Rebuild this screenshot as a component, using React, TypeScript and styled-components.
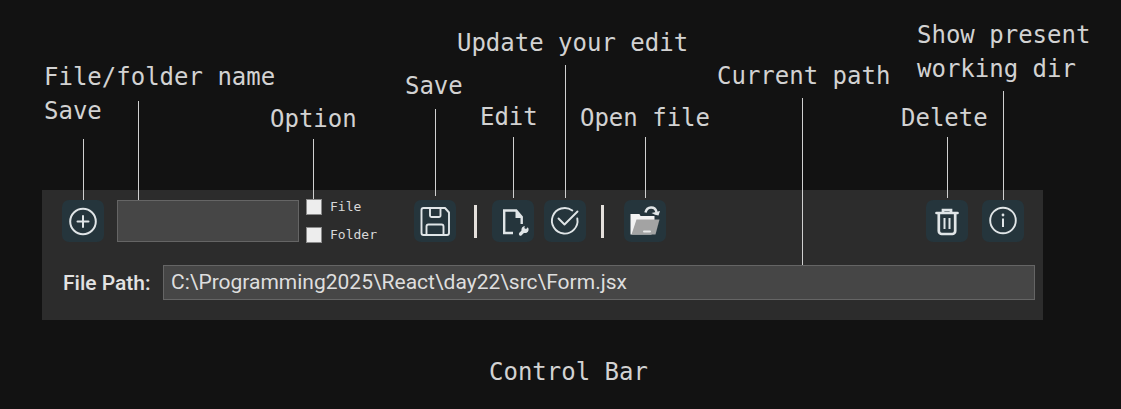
import React from "react";
import styled, { createGlobalStyle } from "styled-components";

const GlobalStyle = createGlobalStyle`
  *, *::before, *::after { box-sizing: border-box; }
  body {
    margin: 0;
    background: #121212;
    color: #d2d2d2;
    font-family: "DejaVu Sans Mono", monospace;
  }
`;

const Figure = styled.figure`
  margin: 0;
  padding: 190px 78px 0 42px;
`;

const Caption = styled.figcaption`
  padding: 35px 0 20px 52px;
  font-size: 24px;
  line-height: 34px;
  text-align: center;
`;

const Panel = styled.form`
  display: flex;
  flex-direction: column;
  gap: 22px;
  padding: 9px 8px 20px 20px;
  background: #2c2c2c;
`;

const Toolbar = styled.div`
  display: flex;
  align-items: center;
  justify-content: space-between;
  padding-right: 11px;
`;

const Group = styled.div<{ $gap: number }>`
  display: flex;
  align-items: center;
  gap: ${(p) => p.$gap}px;
`;

const CreateGroup = styled(Group)`
  margin-right: 37px;
`;

const Anchor = styled.div`
  position: relative;
  display: flex;
`;

/* Leader line that rises from a control to its annotation. */
const Leader = styled.div<{ $x: string; $length: number; $clear: number }>`
  position: absolute;
  left: ${(p) => p.$x};
  bottom: calc(100% + ${(p) => p.$clear}px);
  width: 1px;
  height: ${(p) => p.$length}px;
  background: #d0d0d0;
  pointer-events: none;
`;

const Note = styled.label<{ $shift: number; $gap: number }>`
  position: absolute;
  left: ${(p) => -p.$shift}px;
  bottom: calc(100% + ${(p) => p.$gap}px);
  color: #d2d2d2;
  font-size: 24px;
  line-height: 34px;
  white-space: pre;
`;

const IconButton = styled.button`
  display: flex;
  width: 42px;
  height: 42px;
  padding: 0;
  border: 0;
  border-radius: 7px;
  background: #25353c;
  color: #e0e5e7;
  cursor: pointer;
`;

const Icon = styled.svg`
  width: 42px;
  height: 42px;
  fill: none;
  stroke: currentColor;
  stroke-width: 2;
  stroke-linecap: round;
  stroke-linejoin: round;
`;

const TextBox = styled.input`
  border: 1px solid #656565;
  border-radius: 0;
  background: #464646;
  color: #dedede;
  font-family: Roboto, sans-serif;
  font-size: 21px;
  outline: none;
`;

const NameBox = styled(TextBox)`
  width: 182px;
  height: 42px;
  padding: 0 8px;
`;

const PathBox = styled(TextBox)`
  width: 100%;
  height: 35px;
  padding: 0 7px 2px;
`;

const Options = styled.div`
  position: relative;
  display: flex;
  flex-direction: column;
  gap: 12px;
`;

const Option = styled.label`
  display: flex;
  align-items: center;
  gap: 8px;
  height: 16px;
  color: #d9d9d9;
  font-size: 13px;
  line-height: 16px;
`;

const Tick = styled.input`
  appearance: none;
  width: 16px;
  height: 16px;
  margin: 0;
  border: 1px solid #8a8a8a;
  background: #ededed;
  &:checked { background: #7fa7b8; }
`;

const Divider = styled.span<{ $before: number; $after: number }>`
  width: 3px;
  height: 33px;
  margin-left: ${(p) => p.$before}px;
  margin-right: ${(p) => p.$after}px;
  background: #e4e0dc;
`;

const PathRow = styled.div`
  display: flex;
  align-items: center;
  gap: 10px;
`;

const PathLabel = styled.label`
  flex: none;
  width: 91px;
  padding-left: 1px;
  color: #e2e2e2;
  font-family: Roboto, sans-serif;
  font-size: 21px;
  font-weight: 500;
  line-height: 24px;
  white-space: nowrap;
`;

const PathAnchor = styled(Anchor)`
  flex: 1;
`;

type CalloutProps = {
  text: string;
  target: string;
  length: number;
  shift: number;
  gap?: number;
  x?: string;
  clear?: number;
};

function Callout({ text, target, length, shift, gap = 3, x = "50%", clear = 2 }: CalloutProps) {
  return (
    <Leader $x={x} $length={length} $clear={clear}>
      <Note htmlFor={target} $shift={shift} $gap={gap}>{text}</Note>
    </Leader>
  );
}

type ToolProps = Omit<CalloutProps, "target"> & { id: string; children: React.ReactNode };

function Tool({ id, children, ...note }: ToolProps) {
  return (
    <Anchor>
      <IconButton type="button" id={id}>
        <Icon viewBox="0 0 42 42" aria-hidden="true">{children}</Icon>
      </IconButton>
      <Callout target={id} {...note} />
    </Anchor>
  );
}

export default function App() {
  return (
    <>
      <GlobalStyle />
      <Figure>
        <Panel onSubmit={(e) => e.preventDefault()}>
          <Toolbar>
            <Group $gap={0}>
              <CreateGroup $gap={13}>
                <Tool id="create" text="Save" length={61} shift={39} gap={11} clear={0}>
                  <circle cx="21" cy="21.5" r="12.8" />
                  <path d="M21 16v11M15.500 21.500h11" />
                </Tool>
                <Group $gap={7}>
                  <Anchor>
                    <NameBox id="name" type="text" />
                    <Callout text="File/folder name" target="name" length={99} shift={94} gap={7} x="21px" clear={0} />
                  </Anchor>
                  <Options>
                    <Option><Tick type="checkbox" id="file" />File</Option>
                    <Option><Tick type="checkbox" id="folder" />Folder</Option>
                    <Callout text="Option" target="file" length={60} shift={43} x="7px" clear={0} />
                  </Options>
                </Group>
              </CreateGroup>
              <Group $gap={10}>
                <Tool id="save" text="Save" length={87} shift={30} gap={6} clear={4}>
                  <path d="M9.500 8h21.500l4 4.500v20.500a2 2 0 0 1-2 2h-23.500a2 2 0 0 1-2-2v-23a2 2 0 0 1 2-2zM16 8v7.500a1.500 1.500 0 0 0 1.500 1.500h7.500a1.500 1.500 0 0 0 1.500-1.500v-7.500M12.500 35v-8.500a2 2 0 0 1 2-2h13a2 2 0 0 1 2 2v8.500" strokeWidth="1.900" />
                </Tool>
                <Divider $before={8} $after={5} />
                <Tool id="edit" text="Edit" length={61} shift={33}>
                  <path d="M21 33h-8.800v-22.500h12l5.500 6.500v7" strokeWidth="2.400" strokeLinecap="butt" strokeLinejoin="miter" />
                  <path d="M23.500 10v8h7z" fill="currentColor" stroke="none" />
                  <path d="M28.500 34l4-4" strokeWidth="3.200" />
                  <path d="M35.800 27.200a3.600 3.600 0 1 1-3-1.300l-.5 2.600 1.300 1.100z" fill="currentColor" stroke="none" />
                </Tool>
                <Tool id="update" text="Update your edit" length={133} shift={108} gap={5}>
                  <path d="M33.300 18.500a12.800 12.800 0 1 1-5-8M14.500 18.500l6 6L33.500 11.500" strokeWidth="1.900" />
                </Tool>
                <Divider $before={5} $after={10} />
                <Tool id="open" text="Open file" length={61} shift={65} gap={2}>
                  <path d="M6.500 14h8.500q1 0 1.500 2h14v6l-3 12.500H6.500z" fill="#f2f2f2" stroke="none" />
                  <path d="M12.500 19.500H35.500L31.500 34.500H7.500z" fill="#a3a3a3" stroke="none" />
                  <path d="M20 31.500h6" stroke="#e9e9e9" />
                  <path d="M21.500 12.500c1.500-6.500 9.500-6.500 11-.5" strokeWidth="2.500" strokeLinecap="butt" />
                  <path d="M27.500 13l8.500-2-1.500 4.500q-3.500-.5-7-2.500z" fill="currentColor" stroke="none" />
                </Tool>
              </Group>
            </Group>
            <Group $gap={14}>
              <Tool id="delete" text="Delete" length={61} shift={46} gap={2}>
                <path d="M10.500 13h21M17 13v-3h8v3" strokeWidth="2.700" strokeLinejoin="miter" />
                <path d="M12.800 13.500v17.500a3 3 0 0 0 3 3h10.400a3 3 0 0 0 3-3v-17.500" strokeWidth="2.700" />
                <path d="M18.500 18v11M23.500 18v11" strokeWidth="2" strokeLinecap="butt" />
              </Tool>
              <Tool id="info" text={"Show present\nworking dir"} length={109} shift={86} gap={5} clear={0}>
                <circle cx="21" cy="20.500" r="12.800" strokeWidth="1.900" />
                <path d="M21 18.500v8.500" strokeWidth="2" strokeLinecap="butt" />
                <circle cx="21" cy="15" r="1.400" fill="currentColor" stroke="none" />
              </Tool>
            </Group>
          </Toolbar>
          <PathRow>
            <PathLabel htmlFor="path">File Path:</PathLabel>
            <PathAnchor>
              <PathBox id="path" type="text" defaultValue="C:\Programming2025\React\day22\src\Form.jsx" />
              <Callout text="Current path" target="path" length={167} shift={85} gap={5} x="calc(100% - 233px)" clear={0} />
            </PathAnchor>
          </PathRow>
        </Panel>
        <Caption>Control Bar</Caption>
      </Figure>
    </>
  );
}
